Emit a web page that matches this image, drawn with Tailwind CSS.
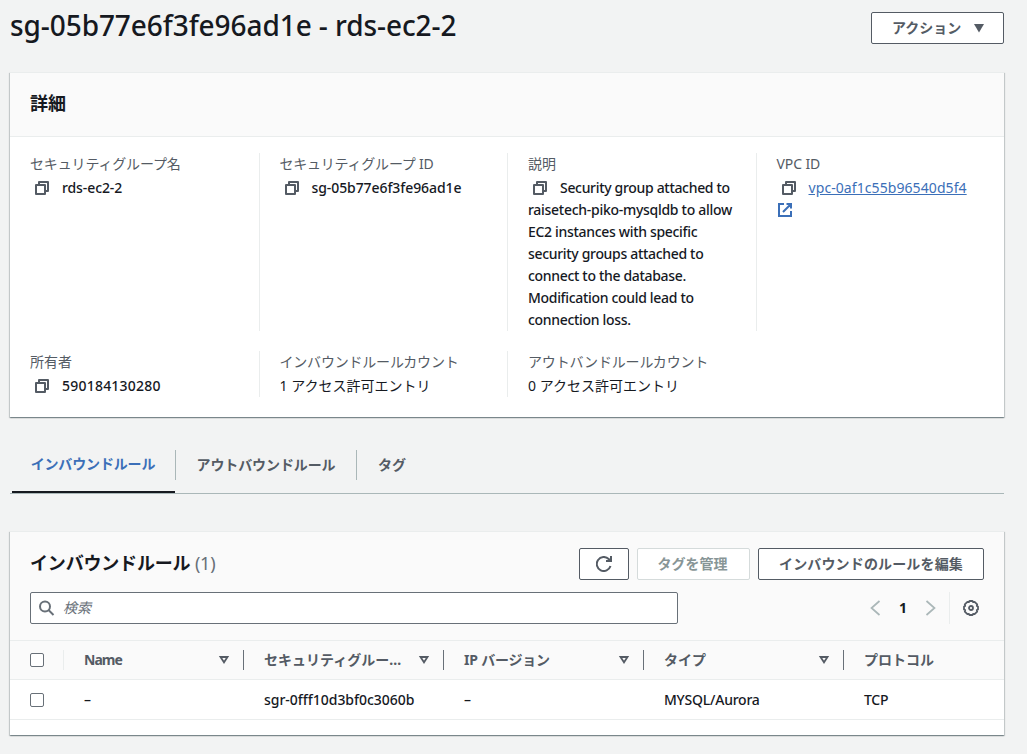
<!DOCTYPE html>
<html lang="ja">
<head>
<meta charset="utf-8">
<title>sg-05b77e6f3fe96ad1e - rds-ec2-2</title>
<script src="https://cdn.jsdelivr.net/npm/@tailwindcss/browser@4"></script>
</head>
<body class="h-[754px] w-[1027px] overflow-hidden bg-[#f2f3f3] pl-[10px] pr-[23px] font-['Noto_Sans','Noto_Sans_CJK_JP',sans-serif] text-sm leading-[22px] text-[#16191f]">
<svg class="hidden">
  <symbol id="copy" viewBox="0 0 16 16"><path d="M2 5h9v9H2z M5 5V2h9v9h-3" fill="none" stroke="currentColor" stroke-width="2" stroke-linejoin="round"/></symbol>
  <symbol id="sort" viewBox="0 0 16 16"><path d="M4.500 5h7L8 10.300z" fill="none" stroke="currentColor" stroke-width="1.800"/></symbol>
</svg>

<header class="flex h-[72px] items-start justify-between">
  <h1 class="mt-[7px] text-[28px] leading-9 font-medium tracking-[-0.07px]">sg-05b77e6f3fe96ad1e - rds-ec2-2</h1>
  <button class="mt-3 flex h-8 w-[133px] items-center rounded-[2px] border border-[#545b64] bg-white pl-5 font-bold text-[#545b64]">アクション<svg class="ml-[13px] h-2.5 w-2.5" viewBox="0 0 10 10"><path d="M0 1h10L5 9.500z" fill="currentColor"/></svg></button>
</header>

<section class="h-[345px] bg-white shadow-[0_1px_1px_0_rgba(0,28,36,0.3),1px_1px_1px_0_rgba(0,28,36,0.15),-1px_1px_1px_0_rgba(0,28,36,0.15)]">
  <div class="flex h-[65px] items-center border-t border-b border-[#eaeded] bg-[#fafafa] px-5 pb-1"><h2 class="text-lg leading-[22px] font-bold">詳細</h2></div>
  <div class="grid grid-cols-4 gap-y-5 pt-4">
    <div class="px-5"><div class="tracking-[-0.15px] text-[#545b64]">セキュリティグループ名</div>
      <div class="mt-0.5 flex items-center pl-1 font-medium tracking-[-0.1px]"><svg class="mr-3 h-4 w-4 text-[#545b64]"><use href="#copy"/></svg>rds-ec2-2</div></div>
    <div class="border-l border-[#eaeded] px-5"><div class="tracking-[-0.22px] text-[#545b64]">セキュリティグループ ID</div>
      <div class="mt-0.5 flex items-center pl-1 font-medium tracking-[-0.08px]"><svg class="mr-3 h-4 w-4 text-[#545b64]"><use href="#copy"/></svg>sg-05b77e6f3fe96ad1e</div></div>
    <div class="border-l border-[#eaeded] pl-5"><div class="text-[#545b64]">説明</div>
      <div class="mt-0.5 font-medium tracking-[-0.32px] whitespace-nowrap"><svg class="mr-3 ml-1 inline-block h-4 w-4 align-[-3px] text-[#545b64]"><use href="#copy"/></svg>Security group attached to<br><span class="tracking-[-0.28px]">raisetech-piko-mysqldb to allow</span><br>EC2 instances with specific<br>security groups attached to<br>connect to the database.<br>Modification could lead to<br>connection loss.</div></div>
    <div class="border-l border-[#eaeded] px-5"><div class="tracking-[-0.1px] text-[#545b64]">VPC ID</div>
      <div class="mt-0.5 flex items-center pl-1"><svg class="mr-3 h-4 w-4 text-[#545b64]"><use href="#copy"/></svg><a class="tracking-[0.08px] text-[#3b6fb8] underline">vpc-0af1c55b96540d5f4</a></div>
      <svg class="mt-[3px] h-4 w-4 text-[#3b6fb8]" viewBox="0 0 16 16" fill="none" stroke="currentColor" stroke-width="2"><path d="M7 2H2v12h12V9M9.500 2H14v4.500M6 10l8-8"/></svg></div>
    <div class="px-5"><div class="text-[#545b64]">所有者</div>
      <div class="mt-0.5 flex items-center pl-1 font-medium tracking-[0.22px]"><svg class="mr-3 h-4 w-4 text-[#545b64]"><use href="#copy"/></svg>590184130280</div></div>
    <div class="border-l border-[#eaeded] px-5"><div class="tracking-[-0.2px] text-[#545b64]">インバウンドルールカウント</div><div class="mt-0.5">1 アクセス許可エントリ</div></div>
    <div class="border-l border-[#eaeded] px-5"><div class="tracking-[-0.16px] text-[#545b64]">アウトバンドルールカウント</div><div class="mt-0.5">0 アクセス許可エントリ</div></div>
  </div>
</section>

<nav class="mt-[18px] flex h-[59px] border-b border-[#aab7b8] pl-0.5 font-bold text-[#545b64]">
  <div class="flex h-[58px] w-[163px] items-center justify-center border-b-2 border-[#16191f] pt-0.5 pr-px tracking-[-0.15px] text-[#3b6fb8]">インバウンドルール</div>
  <div class="mt-[15px] flex h-[30px] w-[182px] items-center justify-center border-x border-[#aab7b8] tracking-[-0.1px]">アウトバウンドルール</div>
  <div class="mt-[15px] flex h-[30px] items-center pl-[21px]">タグ</div>
</nav>

<section class="mt-[37px] h-[204px] bg-white shadow-[0_1px_1px_0_rgba(0,28,36,0.3),1px_1px_1px_0_rgba(0,28,36,0.15),-1px_1px_1px_0_rgba(0,28,36,0.15)]">
  <div class="h-[109px] border-t border-[#eaeded] bg-[#fafafa] px-5 pt-4">
    <div class="flex items-center gap-2">
      <h2 class="mr-auto pb-0.5 text-lg leading-[30px] font-bold tracking-[-0.18px]">インバウンドルール <span class="font-normal text-[#687078]">(1)</span></h2>
      <button class="flex h-8 w-[50px] items-center justify-center rounded-[2px] border border-[#545b64] bg-white text-[#545b64]"><svg class="h-4 w-4" viewBox="0 0 16 16" fill="none" stroke="currentColor" stroke-width="2"><path d="M15 0v5h-5M14.500 10A7 7 0 1 1 12.700 3L14.700 5"/></svg></button>
      <button class="h-8 w-[113px] rounded-[2px] border border-[#d5dbdb] bg-white pr-0.5 font-bold text-[#879596]">タグを管理</button>
      <button class="h-8 w-[226px] rounded-[2px] border border-[#545b64] bg-white font-bold tracking-[0.15px] text-[#545b64]">インバウンドのルールを編集</button>
    </div>
    <div class="mt-3 flex h-8 items-center">
      <div class="flex h-8 w-[648px] items-center rounded-[2px] border border-[#687078] bg-white pl-2 text-[#687078] italic"><svg class="mr-2 h-4 w-4" viewBox="0 0 16 16" fill="none" stroke="currentColor" stroke-width="2"><circle cx="6" cy="6.500" r="5"/><path d="m9.500 10 5 5"/></svg>検索</div>
      <div class="ml-auto flex h-8 items-center">
        <svg class="h-4 w-4 text-[#aab7b8]" viewBox="0 0 16 16" fill="none" stroke="currentColor" stroke-width="1.700"><path d="M12.500 1 4.500 8l8 7"/></svg>
        <span class="w-10 text-center font-bold">1</span>
        <svg class="mr-[10px] h-4 w-4 text-[#aab7b8]" viewBox="0 0 16 16" fill="none" stroke="currentColor" stroke-width="1.700"><path d="m3.500 1 8 7-8 7"/></svg>
        <div class="flex h-8 w-[35px] items-center border-l border-[#eaeded] pl-[13px] text-[#545b64]"><svg class="h-4 w-4" viewBox="0 0 16 16" fill="none" stroke="currentColor" stroke-width="1.800" stroke-linejoin="round"><circle cx="8" cy="8" r="2"/><path d="M6.500 1h3l.6 1.200 1.500-.4 2.600 2.600-.4 1.500 1.200.6v3l-1.200.6.4 1.500-2.600 2.600-1.500-.4-.6 1.200h-3l-.6-1.200-1.500.4-2.600-2.600.4-1.500L1 9.500v-3l1.200-.6-.4-1.500 2.600-2.600 1.500.4z"/></svg></div>
      </div>
    </div>
  </div>
  <div class="grid h-10 grid-cols-[54px_180px_200px_200px_200px_160px] items-center border-y border-[#eaeded] bg-[#fafafa] font-bold text-[#545b64]">
    <div class="flex h-5 items-center border-r border-[#eaeded] pl-5"><span class="h-3.5 w-3.5 rounded-[2px] border border-[#687078] bg-white"></span></div>
    <div class="flex h-5 items-center justify-between border-r border-[#687078] pr-[11px] pl-5"><span class="tracking-[-0.95px]">Name</span><svg class="h-4 w-4"><use href="#sort"/></svg></div>
    <div class="flex h-5 items-center justify-between border-r border-[#687078] pr-[11px] pl-5"><span>セキュリティグルー…</span><svg class="h-4 w-4"><use href="#sort"/></svg></div>
    <div class="flex h-5 items-center justify-between border-r border-[#687078] pr-[11px] pl-5"><span class="tracking-[-0.2px]">IP バージョン</span><svg class="h-4 w-4"><use href="#sort"/></svg></div>
    <div class="flex h-5 items-center justify-between border-r border-[#687078] pr-[11px] pl-5"><span>タイプ</span><svg class="h-4 w-4"><use href="#sort"/></svg></div>
    <div class="pl-5">プロトコル</div>
  </div>
  <div class="grid h-10 grid-cols-[54px_180px_200px_200px_200px_160px] items-center border-b border-[#eaeded] font-medium">
    <div class="pl-5"><span class="block h-3.5 w-3.5 rounded-[2px] border border-[#687078] bg-white"></span></div>
    <div class="pl-5">–</div><div class="pl-5 tracking-[-0.02px]">sgr-0fff10d3bf0c3060b</div><div class="pl-5">–</div><div class="pl-5 tracking-[-0.23px]">MYSQL/Aurora</div><div class="pl-5 tracking-[-0.3px]">TCP</div>
  </div>
</section>
</body>
</html>
